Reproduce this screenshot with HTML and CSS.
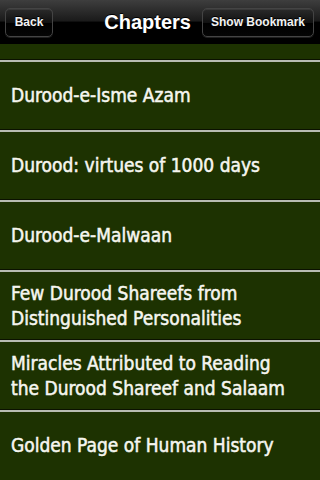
FILE: index.html
```html
<!DOCTYPE html>
<html>
<head>
<meta charset="utf-8">
<link rel="stylesheet" href="styles.css">
</head>
<body>
<div class="screen">
  <div class="navbar">
    <div class="btn btn-back">Back</div>
    <div class="title">Chapters</div>
    <div class="btn btn-bookmark">Show Bookmark</div>
  </div>
  <div class="list">
    <div class="row row-partial"></div>
    <div class="sep"></div>
    <div class="row"><span>Durood-e-Isme Azam</span></div>
    <div class="sep"></div>
    <div class="row"><span>Durood: virtues of 1000 days</span></div>
    <div class="sep"></div>
    <div class="row"><span>Durood-e-Malwaan</span></div>
    <div class="sep"></div>
    <div class="row"><span>Few Durood Shareefs from<br>Distinguished Personalities</span></div>
    <div class="sep"></div>
    <div class="row"><span>Miracles Attributed to Reading<br>the Durood Shareef and Salaam</span></div>
    <div class="sep"></div>
    <div class="row"><span>Golden Page of Human History</span></div>
  </div>
</div>
</body>
</html>
```
FILE: styles.css
```css
html, body {
  margin: 0;
  padding: 0;
  background: #1d3201;
}
.screen {
  width: 320px;
  height: 480px;
  overflow: hidden;
  background: #1d3201;
}
.navbar {
  height: 44px;
  box-sizing: border-box;
  display: flex;
  align-items: center;
  padding: 0 6px 0 5px;
  background: linear-gradient(to bottom, #3e3e3e 0%, #1a1a1a 48%, #000 50%, #000 100%);
  font-family: "Liberation Sans", Arial, sans-serif;
  color: #fff;
}
.btn {
  height: 29px;
  box-sizing: border-box;
  display: flex;
  align-items: center;
  justify-content: center;
  border: 1px solid #444;
  border-radius: 5px;
  background: linear-gradient(to bottom, #2a2a2a 0%, #111 50%, #000 51%, #050505 100%);
  box-shadow: 0 1px 0 rgba(255,255,255,0.12), inset 0 1px 0 rgba(255,255,255,0.08);
  font-size: 12px;
  font-weight: bold;
  color: #f2f2f2;
  text-shadow: 0 -1px 0 #000;
}
.btn-back {
  width: 48px;
}
.btn-bookmark {
  width: 112px;
}
.title {
  flex: 1;
  text-align: right;
  padding-right: 11px;
  font-size: 20px;
  font-weight: bold;
  text-shadow: 0 -1px 0 #000;
}
.list {
  display: flex;
  flex-direction: column;
}
.row {
  height: 67px;
  display: flex;
  align-items: center;
  padding-left: 11px;
  font-family: "DejaVu Sans Condensed", "DejaVu Sans", sans-serif;
  font-weight: normal;
  font-size: 19px;
  line-height: 25px;
  white-space: nowrap;
  color: #f6f6f0;
  -webkit-text-stroke: 0.5px #f6f6f0;
}
.row-partial {
  height: 15px;
}
.sep {
  height: 1px;
  background: #0b1100;
  border-bottom: 2px solid #b8bdb2;
}
```
